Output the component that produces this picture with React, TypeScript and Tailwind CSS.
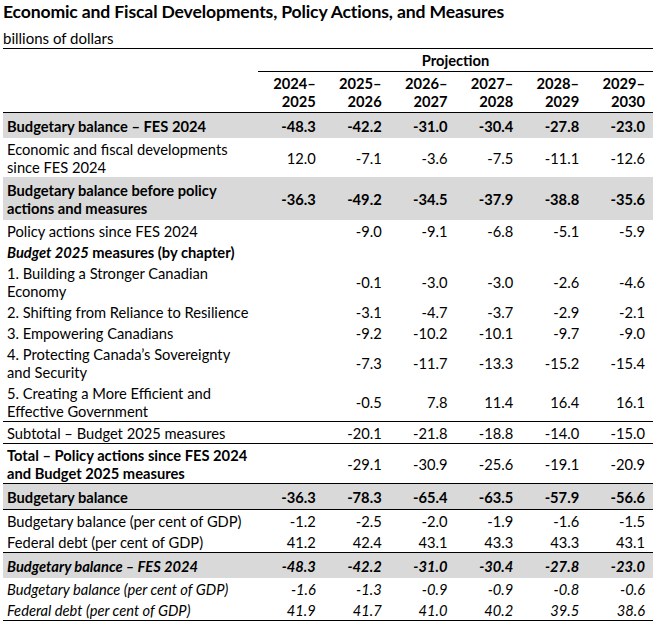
import React from 'react';

type Row = {
  label: React.ReactNode;
  vals: string[];
  gray?: boolean;
  bold?: boolean;
  boldVals?: boolean;
  italic?: boolean;
  lineTop?: boolean;
};

const rows: Row[] = [
  { label: 'Budgetary balance – FES 2024', vals: ['-48.3', '-42.2', '-31.0', '-30.4', '-27.8', '-23.0'], gray: true, bold: true, boldVals: true },
  { label: <>Economic and fiscal developments<br />since FES 2024</>, vals: ['12.0', '-7.1', '-3.6', '-7.5', '-11.1', '-12.6'] },
  { label: <>Budgetary balance before policy<br />actions and measures</>, vals: ['-36.3', '-49.2', '-34.5', '-37.9', '-38.8', '-35.6'], gray: true, bold: true, boldVals: true },
  { label: 'Policy actions since FES 2024', vals: ['', '-9.0', '-9.1', '-6.8', '-5.1', '-5.9'] },
  { label: <><span className="italic">Budget 2025</span> measures (by chapter)</>, vals: ['', '', '', '', '', ''], bold: true },
  { label: <>1. Building a Stronger Canadian<br />Economy</>, vals: ['', '-0.1', '-3.0', '-3.0', '-2.6', '-4.6'] },
  { label: '2. Shifting from Reliance to Resilience', vals: ['', '-3.1', '-4.7', '-3.7', '-2.9', '-2.1'] },
  { label: '3. Empowering Canadians', vals: ['', '-9.2', '-10.2', '-10.1', '-9.7', '-9.0'] },
  { label: <>4. Protecting Canada’s Sovereignty<br />and Security</>, vals: ['', '-7.3', '-11.7', '-13.3', '-15.2', '-15.4'] },
  { label: <>5. Creating a More Efficient and<br />Effective Government</>, vals: ['', '-0.5', '7.8', '11.4', '16.4', '16.1'] },
  { label: 'Subtotal – Budget 2025 measures', vals: ['', '-20.1', '-21.8', '-18.8', '-14.0', '-15.0'], lineTop: true },
  { label: <>Total – Policy actions since FES 2024<br />and Budget 2025 measures</>, vals: ['', '-29.1', '-30.9', '-25.6', '-19.1', '-20.9'], bold: true, lineTop: true },
  { label: 'Budgetary balance', vals: ['-36.3', '-78.3', '-65.4', '-63.5', '-57.9', '-56.6'], gray: true, bold: true, boldVals: true, lineTop: true },
  { label: 'Budgetary balance (per cent of GDP)', vals: ['-1.2', '-2.5', '-2.0', '-1.9', '-1.6', '-1.5'], lineTop: true },
  { label: 'Federal debt (per cent of GDP)', vals: ['41.2', '42.4', '43.1', '43.3', '43.3', '43.1'] },
  { label: 'Budgetary balance – FES 2024', vals: ['-48.3', '-42.2', '-31.0', '-30.4', '-27.8', '-23.0'], gray: true, bold: true, boldVals: true, italic: true, lineTop: true },
  { label: 'Budgetary balance (per cent of GDP)', vals: ['-1.6', '-1.3', '-0.9', '-0.9', '-0.8', '-0.6'], italic: true },
  { label: 'Federal debt (per cent of GDP)', vals: ['41.9', '41.7', '41.0', '40.2', '39.5', '38.6'], italic: true },
];

const years = [
  ['2024–', '2025'],
  ['2025–', '2026'],
  ['2026–', '2027'],
  ['2027–', '2028'],
  ['2028–', '2029'],
  ['2029–', '2030'],
];

const App = () => {
  return (
    <div className="w-[653px] bg-white pl-[3px] text-black" style={{ fontFamily: 'Lato, "Open Sans", sans-serif' }}>
      <h1 className="text-[17.6px] font-bold leading-[24px] tracking-[-0.15px]">
        Economic and Fiscal Developments, Policy Actions, and Measures
      </h1>
      <div className="mt-[5px] text-[15px] leading-[19px]">billions of dollars</div>

      <div className="border-t border-black text-[14.7px] leading-[18px]">
        {/* header */}
        <div className="grid grid-cols-[255px_repeat(6,1fr)]">
          <div />
          <div className="col-span-6 border-b border-black py-[2px] text-center font-bold">Projection</div>
        </div>
        <div className="grid grid-cols-[255px_repeat(6,1fr)] border-b border-black py-[2px]">
          <div />
          {years.map((y) => (
            <div key={y[1]} className="pr-[8px] text-right font-bold">
              {y[0]}
              <br />
              {y[1]}
            </div>
          ))}
        </div>

        {/* body */}
        {rows.map((r, i) => (
          <div
            key={i}
            className={[
              'grid grid-cols-[255px_repeat(6,1fr)] items-center',
              r.gray ? 'bg-[#d9d9d9] py-[3.5px]' : 'py-[1.5px]',
              r.lineTop ? 'border-t border-black' : '',
              r.italic ? 'italic' : '',
              i === rows.length - 1 ? 'border-b border-black' : '',
            ].join(' ')}
          >
            <div className={`pl-[4px] pr-[2px] ${r.bold ? 'font-bold' : ''}`}>{r.label}</div>
            {r.vals.map((v, j) => (
              <div key={j} className={`pr-[8px] text-right ${r.boldVals ? 'font-bold' : ''}`}>
                {v}
              </div>
            ))}
          </div>
        ))}
      </div>
    </div>
  );
};

export default App;
